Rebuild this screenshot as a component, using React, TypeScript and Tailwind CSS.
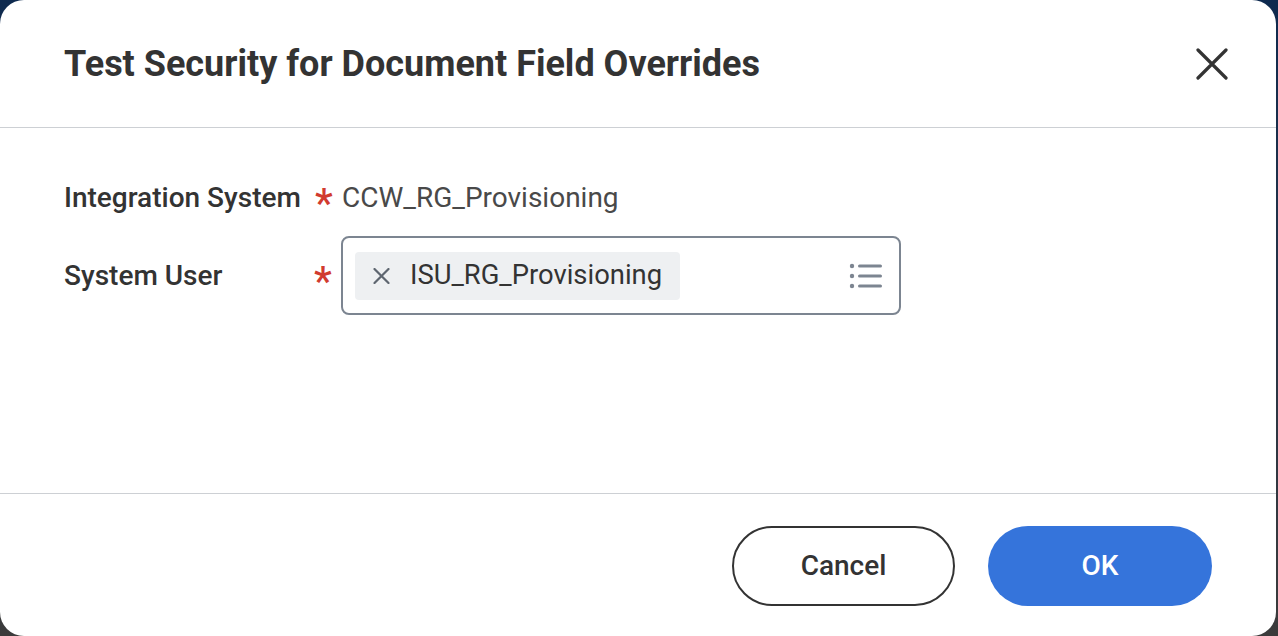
import React from "react";

// Dialog for checking which security applies to document field overrides
export default function App() {
  return (
    <div
      className="h-[636px] w-[1278px] overflow-hidden bg-gradient-to-b from-[#0e2a4f] to-[#3b3b3b]"
      style={{ fontFamily: "Roboto, 'Liberation Sans', sans-serif" }}
    >
      <div className="flex h-[636px] w-[1276px] flex-col rounded-[24px] bg-white text-[#333333]">
        {/* Header */}
        <div className="flex h-[128px] shrink-0 items-center justify-between border-b border-[#cdd0d4] pl-[64px] pr-[48px]">
          <h1 className="text-[36px] font-bold">
            Test Security for Document Field Overrides
          </h1>
          <button className="flex h-[32px] w-[32px] items-center justify-center text-[#333333]">
            <svg width="32" height="32" viewBox="0 0 32 32" fill="none" stroke="currentColor" strokeWidth="3.2" strokeLinecap="round">
              <path d="M2 2 L30 30 M30 2 L2 30" />
            </svg>
          </button>
        </div>

        {/* Body */}
        <div className="flex h-[366px] shrink-0 flex-col gap-[20px] border-b border-[#cdd0d4] px-[64px] pt-[52px]">
          <div className="flex h-[36px] items-center">
            <span className="w-[251px] text-[28px] font-medium">Integration System</span>
            <span className="mt-[12px] w-[27px] text-[40px] font-medium leading-none text-[#d13b2f]">*</span>
            <span className="text-[28px] text-[#494949]">CCW_RG_Provisioning</span>
          </div>
          <div className="flex items-center">
            <span className="w-[250px] text-[28px] font-medium">System User</span>
            <span className="mt-[12px] w-[27px] text-[40px] font-medium leading-none text-[#d13b2f]">*</span>
            <div className="flex h-[79px] w-[560px] items-center justify-between rounded-[8px] border-2 border-[#7c8591] pl-[12px] pr-[16px]">
              <div className="flex h-[48px] items-center gap-[20px] rounded-[4px] bg-[#eef0f2] pl-[18px] pr-[18px]">
                <svg width="17" height="16" viewBox="0 0 17 16" fill="none" stroke="#5e6670" strokeWidth="2.2" strokeLinecap="round">
                  <path d="M1.5 1 L15.5 15 M15.5 1 L1.5 15" />
                </svg>
                <span className="text-[27.4px] text-[#333333]">ISU_RG_Provisioning</span>
              </div>
              <svg width="34" height="26" viewBox="0 0 34 26" className="text-[#7c8591]">
                <g fill="currentColor">
                  <circle cx="3" cy="3" r="2.2" />
                  <circle cx="3" cy="13" r="2.2" />
                  <circle cx="3" cy="23" r="2.2" />
                  <rect x="9" y="1.5" width="24" height="3" rx="1.5" />
                  <rect x="9" y="11.5" width="24" height="3" rx="1.5" />
                  <rect x="9" y="21.5" width="24" height="3" rx="1.5" />
                </g>
              </svg>
            </div>
          </div>
        </div>

        {/* Footer */}
        <div className="flex flex-1 items-start justify-end gap-[33px] pr-[64px] pt-[32px]">
          <button className="flex h-[80px] w-[223px] items-center justify-center rounded-full border-2 border-[#333333] text-[28px] font-medium text-[#333333]">
            Cancel
          </button>
          <button className="flex h-[80px] w-[224px] items-center justify-center rounded-full bg-[#3574db] text-[28px] font-medium text-white">
            OK
          </button>
        </div>
      </div>
    </div>
  );
}
